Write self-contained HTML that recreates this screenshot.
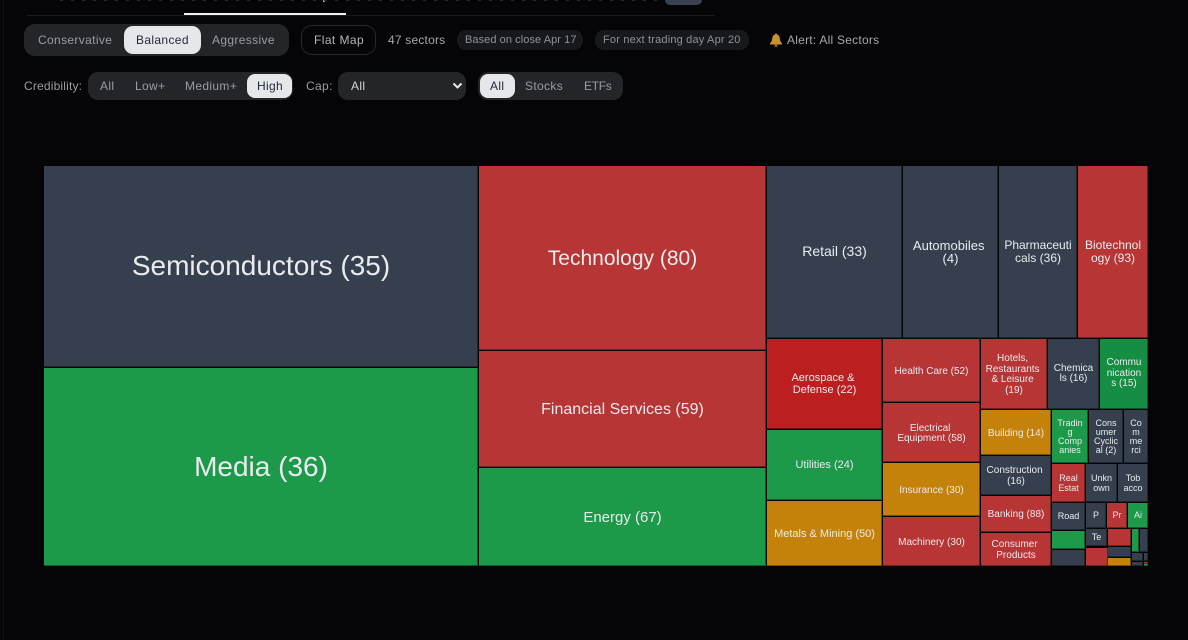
<!DOCTYPE html>
<html><head><meta charset="utf-8"><style>
html,body{margin:0;padding:0;background:#050508;width:1188px;height:640px;overflow:hidden}
body{position:relative;font-family:"Liberation Sans",sans-serif}
.a{position:absolute;box-sizing:border-box}
.t{position:absolute;font-size:12px;line-height:16px;white-space:nowrap;color:#9a9ca3;letter-spacing:.35px}
.c{position:absolute;box-sizing:border-box;display:flex;align-items:center;justify-content:center;text-align:center;color:#e9ebee;overflow:hidden;box-shadow:inset -1px -1px 0 rgba(0,0,0,.4)}
.p{padding-top:2px}
.s{background:#353f4e}.g{background:#1c9a4a}.r{background:#b73535}.o{background:#c4820a}.R{background:#bb1f1f}.G{background:#158e43}
</style></head><body>
<div class="a" style="left:3px;top:0;width:1px;height:640px;background:#111216"></div>
<div class="a" style="left:27px;top:15px;width:688px;height:1px;background:#1a1b1f"></div>
<div class="a" style="left:184px;top:13px;width:162px;height:2px;background:#f1f1f1"></div>
<div class="a" style="left:323px;top:0;width:2px;height:2px;background:#d9962a"></div>
<div class="a" style="left:665px;top:0;width:37px;height:5px;background:#3a4150;border-radius:0 0 8px 8px"></div>
<div class="a" style="left:60px;top:0;width:600px;height:1px;background:repeating-linear-gradient(90deg,#26272b 0 3px,transparent 3px 11px)"></div>

<div class="a" style="left:24px;top:24px;width:265px;height:32px;background:#242529;border-radius:11px"></div>
<div class="a" style="left:124px;top:26px;width:77px;height:28px;background:#e5e7eb;border-radius:9px"></div>
<div class="t" style="left:38px;top:32px">Conservative</div>
<div class="t" style="left:136px;top:32px;color:#1f2937">Balanced</div>
<div class="t" style="left:212px;top:32px">Aggressive</div>
<div class="a" style="left:301px;top:25px;width:75px;height:30px;border:1px solid #26272b;border-radius:11px"></div>
<div class="t" style="left:314px;top:32px;color:#b4b6bb;letter-spacing:.42px">Flat Map</div>
<div class="t" style="left:388px;top:32px;color:#a5a7ad;letter-spacing:.2px">47 sectors</div>
<div class="a" style="left:457px;top:30px;width:126px;height:20px;background:#17181c;border-radius:9px"></div>
<div class="t" style="left:465px;top:32px;font-size:11px;letter-spacing:.07px;color:#8f9198">Based on close Apr 17</div>
<div class="a" style="left:595px;top:30px;width:154px;height:20px;background:#17181c;border-radius:9px"></div>
<div class="t" style="left:603px;top:32px;font-size:11px;letter-spacing:.18px;color:#8f9198">For next trading day Apr 20</div>
<svg class="a" style="left:769px;top:33px" width="15" height="14" viewBox="0 0 15 14"><path d="M7 0.500c.6 0 1 .4 1 1 2 .5 2.600 2.200 2.800 4 .2 2 .8 3.500 2.200 5v1H1v-1c1.400-1.500 2-3 2.200-5 .2-1.800.8-3.500 2.800-4 0-.6.400-1 1-1z" fill="#c9912f"/><circle cx="7" cy="12.500" r="1.500" fill="#9a6a1c"/></svg>
<div class="t" style="left:787px;top:32px;color:#a5a7ad;letter-spacing:.24px">Alert: All Sectors</div>

<div class="t" style="left:24px;top:78px;letter-spacing:.18px">Credibility:</div>
<div class="a" style="left:88px;top:72px;width:205px;height:28px;background:#242529;border-radius:10px"></div>
<div class="a" style="left:247px;top:74px;width:45px;height:24px;background:#e5e7eb;border-radius:8px"></div>
<div class="t" style="left:100px;top:78px">All</div>
<div class="t" style="left:135px;top:78px">Low+</div>
<div class="t" style="left:185px;top:78px">Medium+</div>
<div class="t" style="left:257px;top:78px;color:#1f2937">High</div>
<div class="t" style="left:306px;top:78px">Cap:</div>
<div class="a" style="left:338px;top:72px;width:128px;height:28px;background:#242529;border-radius:10px"></div>
<div class="t" style="left:351px;top:78px;color:#d5d6d9">All</div>
<svg class="a" style="left:452px;top:82px" width="11" height="8" viewBox="0 0 11 8"><path d="M1.500 1.500 5.500 5.500 9.500 1.500" fill="none" stroke="#e5e7eb" stroke-width="2"/></svg>
<div class="a" style="left:478px;top:72px;width:145px;height:28px;background:#242529;border-radius:10px"></div>
<div class="a" style="left:480px;top:74px;width:35px;height:24px;background:#e5e7eb;border-radius:8px"></div>
<div class="t" style="left:490px;top:78px;color:#1f2937">All</div>
<div class="t" style="left:525px;top:78px">Stocks</div>
<div class="t" style="left:584px;top:78px;letter-spacing:-.3px">ETFs</div>

<div class="c s" style="left:44px;top:166px;width:434px;height:201px;font-size:28px;line-height:31px;padding-bottom:2px">Semiconductors (35)</div>
<div class="c g" style="left:44px;top:368px;width:434px;height:198px;font-size:28px;line-height:31px;padding-bottom:2px">Media (36)</div>
<div class="c r p" style="left:479px;top:166px;width:287px;height:184px;font-size:21px;line-height:24px">Technology (80)</div>
<div class="c r p" style="left:479px;top:351px;width:287px;height:116px;font-size:16px;line-height:18px">Financial Services (59)</div>
<div class="c g" style="left:479px;top:468px;width:287px;height:98px;font-size:15px;line-height:17px">Energy (67)</div>
<div class="c s" style="left:767px;top:166px;width:135px;height:172px;font-size:14px;line-height:14px;padding-bottom:2px">Retail (33)</div>
<div class="c s" style="left:903px;top:166px;width:95px;height:172px;font-size:13px;line-height:13px">Automobiles&nbsp;<br>(4)</div>
<div class="c s" style="left:999px;top:166px;width:78px;height:172px;font-size:12px;line-height:13px">Pharmaceuti<br>cals (36)</div>
<div class="c r" style="left:1078px;top:166px;width:70px;height:172px;font-size:12px;line-height:13px">Biotechnol<br>ogy (93)</div>
<div class="c R" style="left:767px;top:339px;width:115px;height:90px;font-size:11px;line-height:12px">Aerospace &amp;&nbsp;<br>Defense (22)</div>
<div class="c g" style="left:767px;top:430px;width:115px;height:70px;font-size:11px;line-height:12px">Utilities (24)</div>
<div class="c o" style="left:767px;top:501px;width:115px;height:65px;font-size:11px;line-height:12px">Metals &amp; Mining (50)</div>
<div class="c r p" style="left:883px;top:339px;width:97px;height:63px;font-size:10px;line-height:10px">Health Care (52)</div>
<div class="c r p" style="left:883px;top:403px;width:97px;height:59px;font-size:10px;line-height:10px">Electrical&nbsp;<br>Equipment (58)</div>
<div class="c o p" style="left:883px;top:463px;width:97px;height:53px;font-size:10px;line-height:10px">Insurance (30)</div>
<div class="c r p" style="left:883px;top:517px;width:97px;height:49px;font-size:10px;line-height:10px">Machinery (30)</div>
<div class="c r p" style="left:981px;top:339px;width:66px;height:70px;font-size:10px;line-height:10.500px">Hotels,&nbsp;<br>Restaurants&nbsp;<br>&amp; Leisure&nbsp;<br>(19)</div>
<div class="c s" style="left:1048px;top:339px;width:51px;height:70px;font-size:10px;line-height:10.500px">Chemica<br>ls (16)</div>
<div class="c G" style="left:1100px;top:339px;width:48px;height:70px;font-size:10px;line-height:10.500px">Commu<br>nication<br>s (15)</div>
<div class="c o p" style="left:981px;top:410px;width:70px;height:45px;font-size:10px;line-height:10px">Building (14)</div>
<div class="c s" style="left:981px;top:456px;width:70px;height:39px;font-size:10px;line-height:11px">Construction&nbsp;<br>(16)</div>
<div class="c r p" style="left:981px;top:496px;width:70px;height:36px;font-size:10px;line-height:10px">Banking (88)</div>
<div class="c r" style="left:981px;top:533px;width:70px;height:33px;font-size:10px;line-height:11px">Consumer&nbsp;<br>Products</div>
<div class="c g" style="left:1052px;top:410px;width:36px;height:53px;font-size:9px;line-height:9px">Tradin<br>g<br>Comp<br>anies</div>
<div class="c s" style="left:1089px;top:410px;width:34px;height:53px;font-size:9px;line-height:9px">Cons<br>umer<br>Cyclic<br>al (2)</div>
<div class="c s" style="left:1124px;top:410px;width:24px;height:53px;font-size:9px;line-height:9px">Co<br>m<br>me<br>rci</div>
<div class="c r" style="left:1052px;top:464px;width:33px;height:38px;font-size:9px;line-height:10px">Real<br>Estat</div>
<div class="c s" style="left:1086px;top:464px;width:31px;height:38px;font-size:9px;line-height:10px">Unkn<br>own</div>
<div class="c s" style="left:1118px;top:464px;width:30px;height:38px;font-size:9px;line-height:10px">Tob<br>acco</div>
<div class="c s" style="left:1052px;top:503px;width:33px;height:27px;font-size:9px;line-height:9px">Road</div>
<div class="c s" style="left:1086px;top:503px;width:20px;height:25px;font-size:9px;line-height:9px">P</div>
<div class="c r" style="left:1107px;top:503px;width:20px;height:25px;font-size:9px;line-height:9px">Pr</div>
<div class="c g" style="left:1128px;top:503px;width:20px;height:25px;font-size:9px;line-height:9px">Ai</div>
<div class="c g" style="left:1052px;top:531px;width:33px;height:18px"></div>
<div class="c s" style="left:1052px;top:550px;width:33px;height:16px"></div>
<div class="c s" style="left:1086px;top:529px;width:21px;height:17px;font-size:9px;line-height:9px">Te</div>
<div class="c r" style="left:1086px;top:548px;width:22px;height:18px"></div>
<div class="c r" style="left:1108px;top:529px;width:23px;height:17px"></div>
<div class="c s" style="left:1108px;top:547px;width:23px;height:10px"></div>
<div class="c o" style="left:1108px;top:558px;width:23px;height:8px"></div>
<div class="c g" style="left:1132px;top:529px;width:7px;height:23px"></div>
<div class="c s" style="left:1140px;top:529px;width:8px;height:23px"></div>
<div class="c s" style="left:1132px;top:553px;width:11px;height:8px"></div>
<div class="c s" style="left:1144px;top:553px;width:4px;height:8px"></div>
<div class="c s" style="left:1132px;top:562px;width:11px;height:4px"></div>
<div class="c r" style="left:1144px;top:562px;width:4px;height:2px"></div>
<div class="c g" style="left:1144px;top:564px;width:4px;height:2px"></div>
</body></html>
